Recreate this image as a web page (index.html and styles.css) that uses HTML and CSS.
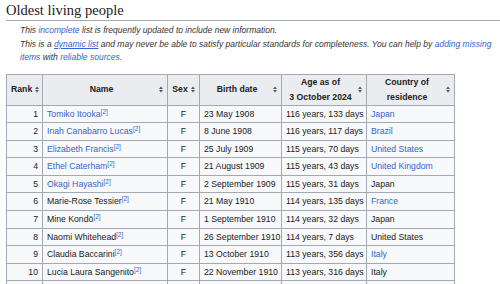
FILE: index.html
```html
<!DOCTYPE html>
<html>
<head>
<meta charset="utf-8">
<link rel="stylesheet" href="styles.css">
</head>
<body>
<h2 class="heading">Oldest living people</h2>
<div class="hatnote">
  <p>This <a href="#">incomplete</a> list is frequently updated to include new information.</p>
  <p>This is a <a href="#" class="ul">dynamic list</a> and may never be able to satisfy particular standards for completeness. You can help by <a href="#">adding missing</a> <a href="#">items</a> with <a href="#">reliable sources</a>.</p>
</div>
<table class="wt">
  <colgroup>
    <col class="c-rank"><col class="c-name"><col class="c-sex"><col class="c-birth"><col class="c-age"><col class="c-country">
  </colgroup>
  <thead>
    <tr>
      <th><div class="th-in"><span class="lbl">Rank</span><svg class="sort" viewBox="0 0 4 7" width="4" height="7"><path d="M0 3 L2 0.5 L4 3 Z M0 4 L2 6.5 L4 4 Z" fill="#54595d"/></svg></div></th>
      <th><div class="th-in"><span class="lbl">Name</span><svg class="sort" viewBox="0 0 4 7" width="4" height="7"><path d="M0 3 L2 0.5 L4 3 Z M0 4 L2 6.5 L4 4 Z" fill="#54595d"/></svg></div></th>
      <th><div class="th-in"><span class="lbl">Sex</span><svg class="sort" viewBox="0 0 4 7" width="4" height="7"><path d="M0 3 L2 0.5 L4 3 Z M0 4 L2 6.5 L4 4 Z" fill="#54595d"/></svg></div></th>
      <th><div class="th-in"><span class="lbl">Birth date</span><svg class="sort" viewBox="0 0 4 7" width="4" height="7"><path d="M0 3 L2 0.5 L4 3 Z M0 4 L2 6.5 L4 4 Z" fill="#54595d"/></svg></div></th>
      <th><div class="th-in"><span class="lbl">Age as of<br>3 October 2024</span><svg class="sort" viewBox="0 0 4 7" width="4" height="7"><path d="M0 3 L2 0.5 L4 3 Z M0 4 L2 6.5 L4 4 Z" fill="#54595d"/></svg></div></th>
      <th><div class="th-in"><span class="lbl">Country of<br>residence</span><svg class="sort" viewBox="0 0 4 7" width="4" height="7"><path d="M0 3 L2 0.5 L4 3 Z M0 4 L2 6.5 L4 4 Z" fill="#54595d"/></svg></div></th>
    </tr>
  </thead>
  <tbody>
    <tr><td class="r">1</td><td><a href="#">Tomiko Itooka</a><sup><a href="#">[2]</a></sup></td><td class="c">F</td><td>23 May 1908</td><td>116 years, 133 days</td><td><a href="#">Japan</a></td></tr>
    <tr><td class="r">2</td><td><a href="#">Inah Canabarro Lucas</a><sup><a href="#">[2]</a></sup></td><td class="c">F</td><td>8 June 1908</td><td>116 years, 117 days</td><td><a href="#">Brazil</a></td></tr>
    <tr><td class="r">3</td><td><a href="#">Elizabeth Francis</a><sup><a href="#">[2]</a></sup></td><td class="c">F</td><td>25 July 1909</td><td>115 years, 70 days</td><td><a href="#">United States</a></td></tr>
    <tr><td class="r">4</td><td><a href="#">Ethel Caterham</a><sup><a href="#">[2]</a></sup></td><td class="c">F</td><td>21 August 1909</td><td>115 years, 43 days</td><td><a href="#">United Kingdom</a></td></tr>
    <tr><td class="r">5</td><td><a href="#">Okagi Hayashi</a><sup><a href="#">[2]</a></sup></td><td class="c">F</td><td>2 September 1909</td><td>115 years, 31 days</td><td>Japan</td></tr>
    <tr><td class="r">6</td><td>Marie-Rose Tessier<sup><a href="#">[2]</a></sup></td><td class="c">F</td><td>21 May 1910</td><td>114 years, 135 days</td><td><a href="#">France</a></td></tr>
    <tr><td class="r">7</td><td>Mine Kondō<sup><a href="#">[2]</a></sup></td><td class="c">F</td><td>1 September 1910</td><td>114 years, 32 days</td><td>Japan</td></tr>
    <tr><td class="r">8</td><td>Naomi Whitehead<sup><a href="#">[2]</a></sup></td><td class="c">F</td><td>26 September 1910</td><td>114 years, 7 days</td><td>United States</td></tr>
    <tr><td class="r">9</td><td>Claudia Baccarini<sup><a href="#">[2]</a></sup></td><td class="c">F</td><td>13 October 1910</td><td>113 years, 356 days</td><td><a href="#">Italy</a></td></tr>
    <tr><td class="r">10</td><td>Lucia Laura Sangenito<sup><a href="#">[2]</a></sup></td><td class="c">F</td><td>22 November 1910</td><td>113 years, 316 days</td><td>Italy</td></tr>
    <tr><td class="r">&nbsp;</td><td>&nbsp;</td><td class="c">&nbsp;</td><td>&nbsp;</td><td>&nbsp;</td><td>&nbsp;</td></tr>
  </tbody>
</table>
</body>
</html>
```
FILE: styles.css
```css
html, body {
  margin: 0;
  background: #ffffff;
}
body {
  padding: 0 3px 0 6px;
  font-family: "Liberation Sans", Arial, sans-serif;
  color: #202122;
  font-size: 8.7px;
  overflow: hidden;
}
a {
  color: #3366cc;
  text-decoration: none;
}
a.ul {
  text-decoration: underline;
}
.heading {
  margin: 0 -3px 0 0;
  padding-top: 1px;
  font-family: "Liberation Serif", "Times New Roman", serif;
  font-weight: normal;
  font-size: 14.5px;
  line-height: 19px;
  border-bottom: 1px solid #a2a9b1;
}
.hatnote {
  padding-left: 14px;
  padding-top: 3px;
  font-style: italic;
  font-size: 8.5px;
  color: #333333;
  line-height: 13.5px;
}
.hatnote p {
  margin: 0;
}
.wt {
  margin-top: 9px;
  border-collapse: collapse;
  table-layout: fixed;
  width: 448px;
  background: #f8f9fa;
  border: 1px solid #a2a9b1;
}
.c-rank { width: 36px; }
.c-name { width: 125px; }
.c-sex { width: 32px; }
.c-birth { width: 82px; }
.c-age { width: 85px; }
.c-country { width: 88px; }
.wt th {
  background: #eaecf0;
  border: 1px solid #a2a9b1;
  padding: 0.5px 4px;
  line-height: 14.5px;
  font-weight: bold;
}
.th-in {
  display: flex;
  align-items: center;
  gap: 3px;
}
.lbl {
  flex: 1;
  text-align: center;
}
.sort {
  flex: none;
  display: block;
}
.wt td {
  border: 1px solid #a2a9b1;
  padding: 2px 4px;
  line-height: 12.6px;
  white-space: nowrap;
  overflow: hidden;
}
.wt td.r {
  text-align: right;
}
.wt td.c {
  text-align: center;
}
sup {
  font-size: 6.5px;
  line-height: 1;
  vertical-align: 3px;
}
```
